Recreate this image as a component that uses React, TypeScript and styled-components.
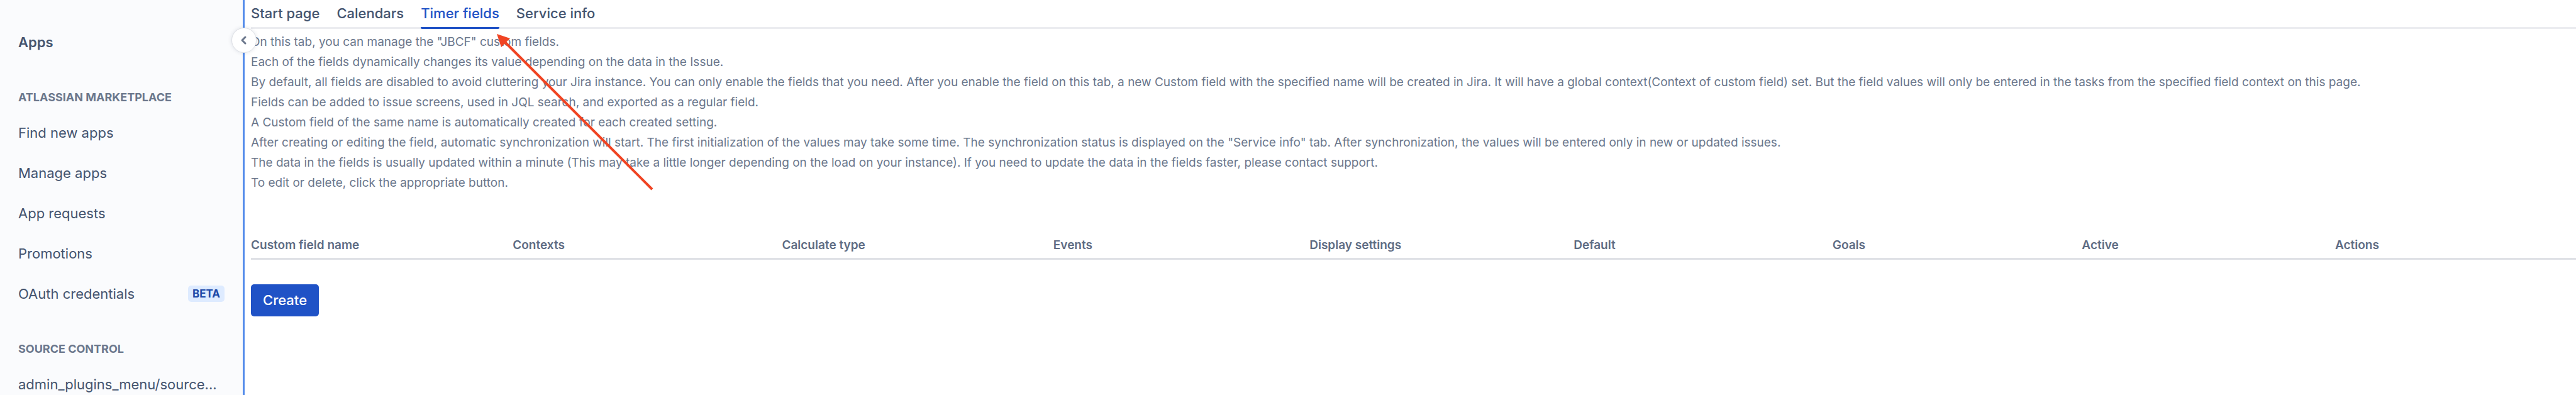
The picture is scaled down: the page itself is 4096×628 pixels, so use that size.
import React from "react";
import styled, { createGlobalStyle } from "styled-components";

const GlobalStyle = createGlobalStyle`
  *, *::before, *::after { box-sizing: border-box; }
  body {
    margin: 0;
    background: #ffffff;
    color: #44546f;
    font-family: Inter, "Liberation Sans", sans-serif;
  }
`;

const Page = styled.div`
  position: relative;
  display: flex;
  min-height: 100vh;
`;

const Sidebar = styled.aside`
  position: relative;
  flex: 0 0 389px;
  padding: 35px 29px 0;
  background: #fafbfd;
  border-right: 3px solid #548ceb;
`;

const SidebarTitle = styled.h1`
  margin: 0;
  font-size: 22px;
  font-weight: 600;
  line-height: 64px;
`;

const SidebarHeading = styled.h2`
  margin: 0;
  padding-top: 32px;
  color: #6b778c;
  font-size: 18px;
  font-weight: 700;
  line-height: 48px;
`;

const NavList = styled.ul`
  display: flex;
  flex-direction: column;
  gap: 32px;
  margin: 0;
  padding: 16px 0;
  list-style: none;
`;

const NavItem = styled.li`
  display: flex;
  align-items: center;
  justify-content: space-between;
`;

const NavLink = styled.a`
  color: #44546f;
  font-size: 22px;
  line-height: 32px;
  text-decoration: none;
  white-space: nowrap;
`;

const Badge = styled.span`
  padding: 0 7px;
  border-radius: 5px;
  background: #deebff;
  color: #1d49a7;
  font-size: 17px;
  font-weight: 700;
  line-height: 26px;
`;

const CollapseButton = styled.button`
  position: absolute;
  top: 44px;
  right: -22px;
  z-index: 1;
  display: flex;
  align-items: center;
  justify-content: center;
  width: 40px;
  height: 40px;
  padding: 0;
  border: 1px solid #dfe1e6;
  border-radius: 50%;
  background: #ffffff;
  box-shadow: 0 0 6px rgba(9, 30, 66, 0.12);
`;

const Main = styled.main`
  flex: 1;
  min-width: 0;
  padding-left: 10px;
`;

const TabBar = styled.nav`
  display: flex;
  gap: 27px;
  height: 46px;
  box-shadow: inset 0 -3px 0 #ebecf0;
`;

const Tab = styled.a<{ $active?: boolean }>`
  height: 46px;
  border-bottom: 3px solid ${(p) => (p.$active ? "#1f52c6" : "transparent")};
  border-radius: 2px;
  color: ${(p) => (p.$active ? "#1f52c6" : "#44546f")};
  font-size: 22px;
  font-weight: 500;
  line-height: 42px;
  text-decoration: none;
`;

const Description = styled.section`
  padding-top: 5px;
  color: #6b778c;
`;

const Line = styled.p`
  margin: 0;
  font-size: 19px;
  line-height: 32px;
`;

const FieldTable = styled.table`
  width: 100%;
  margin-top: 62px;
  border-collapse: collapse;
  table-layout: fixed;
`;

const HeaderCell = styled.th<{ $share: number }>`
  width: ${(p) => p.$share}%;
  height: 42px;
  padding: 2px 0 0;
  border-bottom: 3px solid #dfe1e6;
  color: #5e6c84;
  font-size: 19px;
  font-weight: 600;
  line-height: 24px;
  text-align: left;
`;

const CreateButton = styled.button`
  height: 51px;
  margin-top: 39px;
  padding: 0 19px;
  border: 0;
  border-radius: 5px;
  background: #1f52c6;
  color: #ffffff;
  font-family: inherit;
  font-size: 22px;
  font-weight: 500;
`;

const Arrow = styled.svg`
  position: absolute;
  top: 50px;
  left: 786px;
  z-index: 2;
  pointer-events: none;
`;

const marketplace: { label: string; badge?: string }[] = [
  { label: "Find new apps" },
  { label: "Manage apps" },
  { label: "App requests" },
  { label: "Promotions" },
  { label: "OAuth credentials", badge: "BETA" },
];

const tabs = ["Start page", "Calendars", "Timer fields", "Service info"];

const lines = [
  'On this tab, you can manage the "JBCF" custom fields.',
  "Each of the fields dynamically changes its value depending on the data in the Issue.",
  "By default, all fields are disabled to avoid cluttering your Jira instance. You can only enable the fields that you need. After you enable the field on this tab, a new Custom field with the specified name will be created in Jira. It will have a global context(Context of custom field) set. But the field values will only be entered in the tasks from the specified field context on this page.",
  "Fields can be added to issue screens, used in JQL search, and exported as a regular field.",
  "A Custom field of the same name is automatically created for each created setting.",
  'After creating or editing the field, automatic synchronization will start. The first initialization of the values may take some time. The synchronization status is displayed on the "Service info" tab. After synchronization, the values will be entered only in new or updated issues.',
  "The data in the fields is usually updated within a minute (This may take a little longer depending on the load on your instance). If you need to update the data in the fields faster, please contact support.",
  "To edit or delete, click the appropriate button.",
];

const columns = [
  { label: "Custom field name", share: 11.26 },
  { label: "Contexts", share: 11.58 },
  { label: "Calculate type", share: 11.67 },
  { label: "Events", share: 11.02 },
  { label: "Display settings", share: 11.36 },
  { label: "Default", share: 11.13 },
  { label: "Goals", share: 10.73 },
  { label: "Active", share: 10.89 },
  { label: "Actions", share: 10.36 },
];

export default function App() {
  return (
    <Page>
      <GlobalStyle />
      <Sidebar>
        <SidebarTitle>Apps</SidebarTitle>
        <SidebarHeading>ATLASSIAN MARKETPLACE</SidebarHeading>
        <NavList>
          {marketplace.map((item) => (
            <NavItem key={item.label}>
              <NavLink href="#">{item.label}</NavLink>
              {item.badge && <Badge>{item.badge}</Badge>}
            </NavItem>
          ))}
        </NavList>
        <SidebarHeading>SOURCE CONTROL</SidebarHeading>
        <NavList>
          <NavItem>
            <NavLink href="#">admin_plugins_menu/source...</NavLink>
          </NavItem>
        </NavList>
        <CollapseButton type="button" aria-label="Collapse sidebar">
          <svg width="14" height="16" viewBox="0 0 14 16" fill="none">
            <path d="M9 3L4 8L9 13" stroke="#6b778c" strokeWidth="3" strokeLinecap="round" strokeLinejoin="round" />
          </svg>
        </CollapseButton>
      </Sidebar>
      <Main>
        <TabBar>
          {tabs.map((tab) => (
            <Tab key={tab} href="#" $active={tab === "Timer fields"}>
              {tab}
            </Tab>
          ))}
        </TabBar>
        <Description>
          {lines.map((line) => (
            <Line key={line}>{line}</Line>
          ))}
        </Description>
        <FieldTable>
          <thead>
            <tr>
              {columns.map((column) => (
                <HeaderCell key={column.label} scope="col" $share={column.share}>
                  {column.label}
                </HeaderCell>
              ))}
            </tr>
          </thead>
        </FieldTable>
        <CreateButton type="button">Create</CreateButton>
      </Main>
      <Arrow width="256" height="256" viewBox="0 0 256 256" fill="none" aria-hidden="true">
        <path d="M16 16L251 251" stroke="#f04423" strokeWidth="4" />
        <path d="M4 4L25 11L11 25Z" fill="#f04423" />
      </Arrow>
    </Page>
  );
}
